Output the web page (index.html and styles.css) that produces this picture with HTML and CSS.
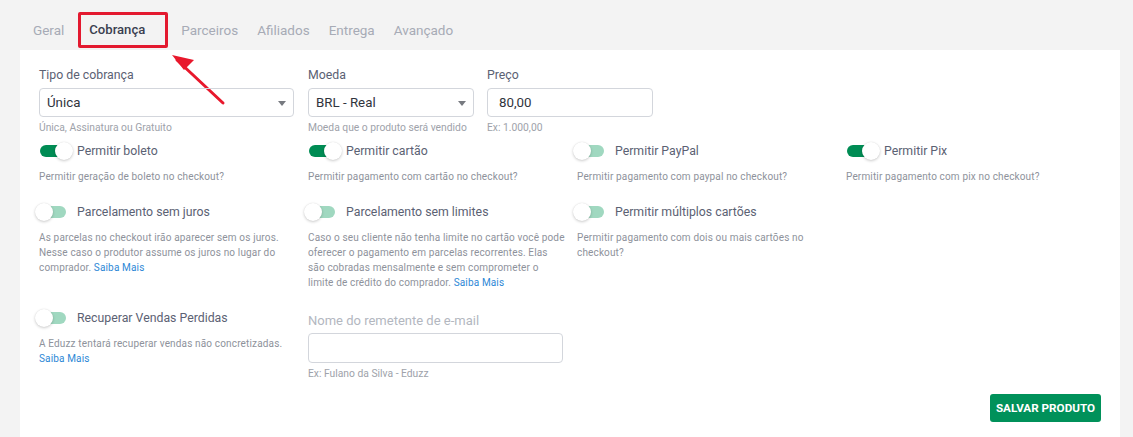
FILE: index.html
```html
<!DOCTYPE html>
<html lang="pt-BR">
<head>
<meta charset="utf-8">
<link rel="stylesheet" href="styles.css">
</head>
<body>
<nav class="tabs">
  <span class="tab">Geral</span>
  <span class="tab active">Cobrança</span>
  <span class="tab">Parceiros</span>
  <span class="tab">Afiliados</span>
  <span class="tab">Entrega</span>
  <span class="tab">Avançado</span>
</nav>
<svg class="arrow" width="70" height="60" viewBox="0 0 70 60">
  <line x1="12" y1="10" x2="58" y2="53" stroke="#e8182c" stroke-width="3" stroke-linecap="round"/>
  <polygon points="7,5 19,20 29,10" fill="#e8182c"/>
</svg>
<main class="card">
  <div class="fields">
    <div class="field w255">
      <div class="label">Tipo de cobrança</div>
      <div class="box select">Única<span class="caret"></span></div>
      <div class="hint">Única, Assinatura ou Gratuito</div>
    </div>
    <div class="field w166">
      <div class="label">Moeda</div>
      <div class="box select">BRL - Real<span class="caret"></span></div>
      <div class="hint">Moeda que o produto será vendido</div>
    </div>
    <div class="field w166">
      <div class="label">Preço</div>
      <div class="box input">80,00</div>
      <div class="hint">Ex: 1.000,00</div>
    </div>
  </div>

  <div class="grid">
    <div class="opt">
      <div class="toggle-row"><span class="switch on"><span class="track"></span><span class="knob"></span></span><span class="opt-label">Permitir boleto</span></div>
      <p class="desc">Permitir geração de boleto no checkout?</p>
    </div>
    <div class="opt">
      <div class="toggle-row"><span class="switch on"><span class="track"></span><span class="knob"></span></span><span class="opt-label">Permitir cartão</span></div>
      <p class="desc">Permitir pagamento com cartão no checkout?</p>
    </div>
    <div class="opt">
      <div class="toggle-row"><span class="switch"><span class="track"></span><span class="knob"></span></span><span class="opt-label">Permitir PayPal</span></div>
      <p class="desc">Permitir pagamento com paypal no checkout?</p>
    </div>
    <div class="opt">
      <div class="toggle-row"><span class="switch on"><span class="track"></span><span class="knob"></span></span><span class="opt-label">Permitir Pix</span></div>
      <p class="desc">Permitir pagamento com pix no checkout?</p>
    </div>

    <div class="opt">
      <div class="toggle-row"><span class="switch"><span class="track"></span><span class="knob"></span></span><span class="opt-label">Parcelamento sem juros</span></div>
      <p class="desc">As parcelas no checkout irão aparecer sem os juros. Nesse caso o produtor assume os juros no lugar do comprador. <a class="link">Saiba Mais</a></p>
    </div>
    <div class="opt">
      <div class="toggle-row"><span class="switch"><span class="track"></span><span class="knob"></span></span><span class="opt-label">Parcelamento sem limites</span></div>
      <p class="desc">Caso o seu cliente não tenha limite no cartão você pode oferecer o pagamento em parcelas recorrentes. Elas são cobradas mensalmente e sem comprometer o limite de crédito do comprador. <a class="link">Saiba Mais</a></p>
    </div>
    <div class="opt">
      <div class="toggle-row"><span class="switch"><span class="track"></span><span class="knob"></span></span><span class="opt-label">Permitir múltiplos cartões</span></div>
      <p class="desc">Permitir pagamento com dois ou mais cartões no checkout?</p>
    </div>
    <div class="opt"></div>

    <div class="opt">
      <div class="toggle-row"><span class="switch"><span class="track"></span><span class="knob"></span></span><span class="opt-label">Recuperar Vendas Perdidas</span></div>
      <p class="desc">A Eduzz tentará recuperar vendas não concretizadas. <a class="link">Saiba Mais</a></p>
    </div>
    <div class="opt email">
      <div class="label muted">Nome do remetente de e-mail</div>
      <div class="box input empty"></div>
      <div class="hint">Ex: Fulano da Silva - Eduzz</div>
    </div>
  </div>

  <div class="actions">
    <button class="btn">SALVAR PRODUTO</button>
  </div>
</main>
</body>
</html>
```

FILE: styles.css
```css
* { box-sizing: border-box; }
html, body { margin: 0; padding: 0; }
body {
  background: #f3f3f3;
  font-family: Roboto, "Liberation Sans", Arial, sans-serif;
  height: 437px;
  overflow: hidden;
  position: relative;
}

.tabs {
  display: flex;
  align-items: center;
  height: 50px;
  padding: 12px 0 2px 23.5px;
}
.tab {
  font-size: 13.5px;
  color: #a7abb6;
  padding: 0 9.5px;
  line-height: 36px;
  height: 36px;
}
.tab.active {
  color: #3a3f50;
  font-weight: 500;
  font-size: 13.1px;
  border: 3px solid #e3192f;
  border-radius: 2px;
  line-height: 30px;
  width: 90px;
  padding: 0 0 0 8px;
  margin: 0 3.5px 0 4.5px;
}

.arrow {
  position: absolute;
  left: 165px;
  top: 50px;
}

.card {
  background: #fff;
  margin: 0 13px 0 20px;
  padding: 17px 19px 20px 19px;
  min-height: 400px;
}

.fields { display: flex; }
.field { display: flex; flex-direction: column; }
.w255 { width: 255px; margin-right: 14px; }
.w166 { width: 166px; margin-right: 13px; }

.label {
  font-size: 12.3px;
  line-height: 16px;
  color: #5b6173;
}
.label.muted { color: #b3b7bf; font-size: 13px; }

.box {
  margin-top: 5px;
  height: 29px;
  border: 1px solid #d3d6dc;
  border-radius: 4px;
  font-size: 13.3px;
  color: #30343d;
  display: flex;
  align-items: center;
  position: relative;
}
.select { padding-left: 7px; }
.input { padding-left: 11px; }
.caret {
  position: absolute;
  right: 7px;
  top: 12px;
  width: 0; height: 0;
  border-left: 4.5px solid transparent;
  border-right: 4.5px solid transparent;
  border-top: 5px solid #777a80;
}
.hint {
  margin-top: 5px;
  font-size: 10.3px;
  line-height: 12px;
  color: #9ea2aa;
}

.grid {
  display: grid;
  grid-template-columns: 269px 269px 269px 1fr;
  row-gap: 18px;
  margin-top: 7px;
}
.opt { padding-right: 12px; }
.toggle-row {
  display: flex;
  align-items: center;
  height: 20px;
}
.switch {
  position: relative;
  width: 38px;
  height: 20px;
  margin-left: -4px;
  margin-right: 4px;
  flex: none;
}
.track {
  position: absolute;
  left: 5px;
  top: 4px;
  width: 26px;
  height: 12px;
  border-radius: 6px;
  background: #a0d8c0;
}
.knob {
  position: absolute;
  left: 0;
  top: 1px;
  width: 18px;
  height: 18px;
  border-radius: 50%;
  background: #fff;
  box-shadow: 0 1px 3px rgba(0,0,0,0.2), 0 0 1px rgba(0,0,0,0.1);
}
.switch.on .track { background: #008c54; }
.switch.on .knob { left: 20px; }
.opt-label {
  font-size: 12.3px;
  color: #5b6173;
  white-space: nowrap;
}
.desc {
  margin: 8px 0 0;
  font-size: 10px;
  letter-spacing: 0.15px;
  line-height: 15px;
  color: #8e929b;
}
.link { color: #2d88d6; }

.email { padding-top: 5px; }
.email .box { margin-top: 4px; height: 30px; width: 255px; }

.actions {
  display: flex;
  justify-content: flex-end;
  margin-top: 14px;
}
.btn {
  width: 111px;
  height: 28px;
  border: none;
  border-radius: 3px;
  background: #00915a;
  color: #fff;
  font-family: Roboto, "Liberation Sans", Arial, sans-serif;
  font-weight: 700;
  font-size: 11.7px;
  padding: 0;
}
```
